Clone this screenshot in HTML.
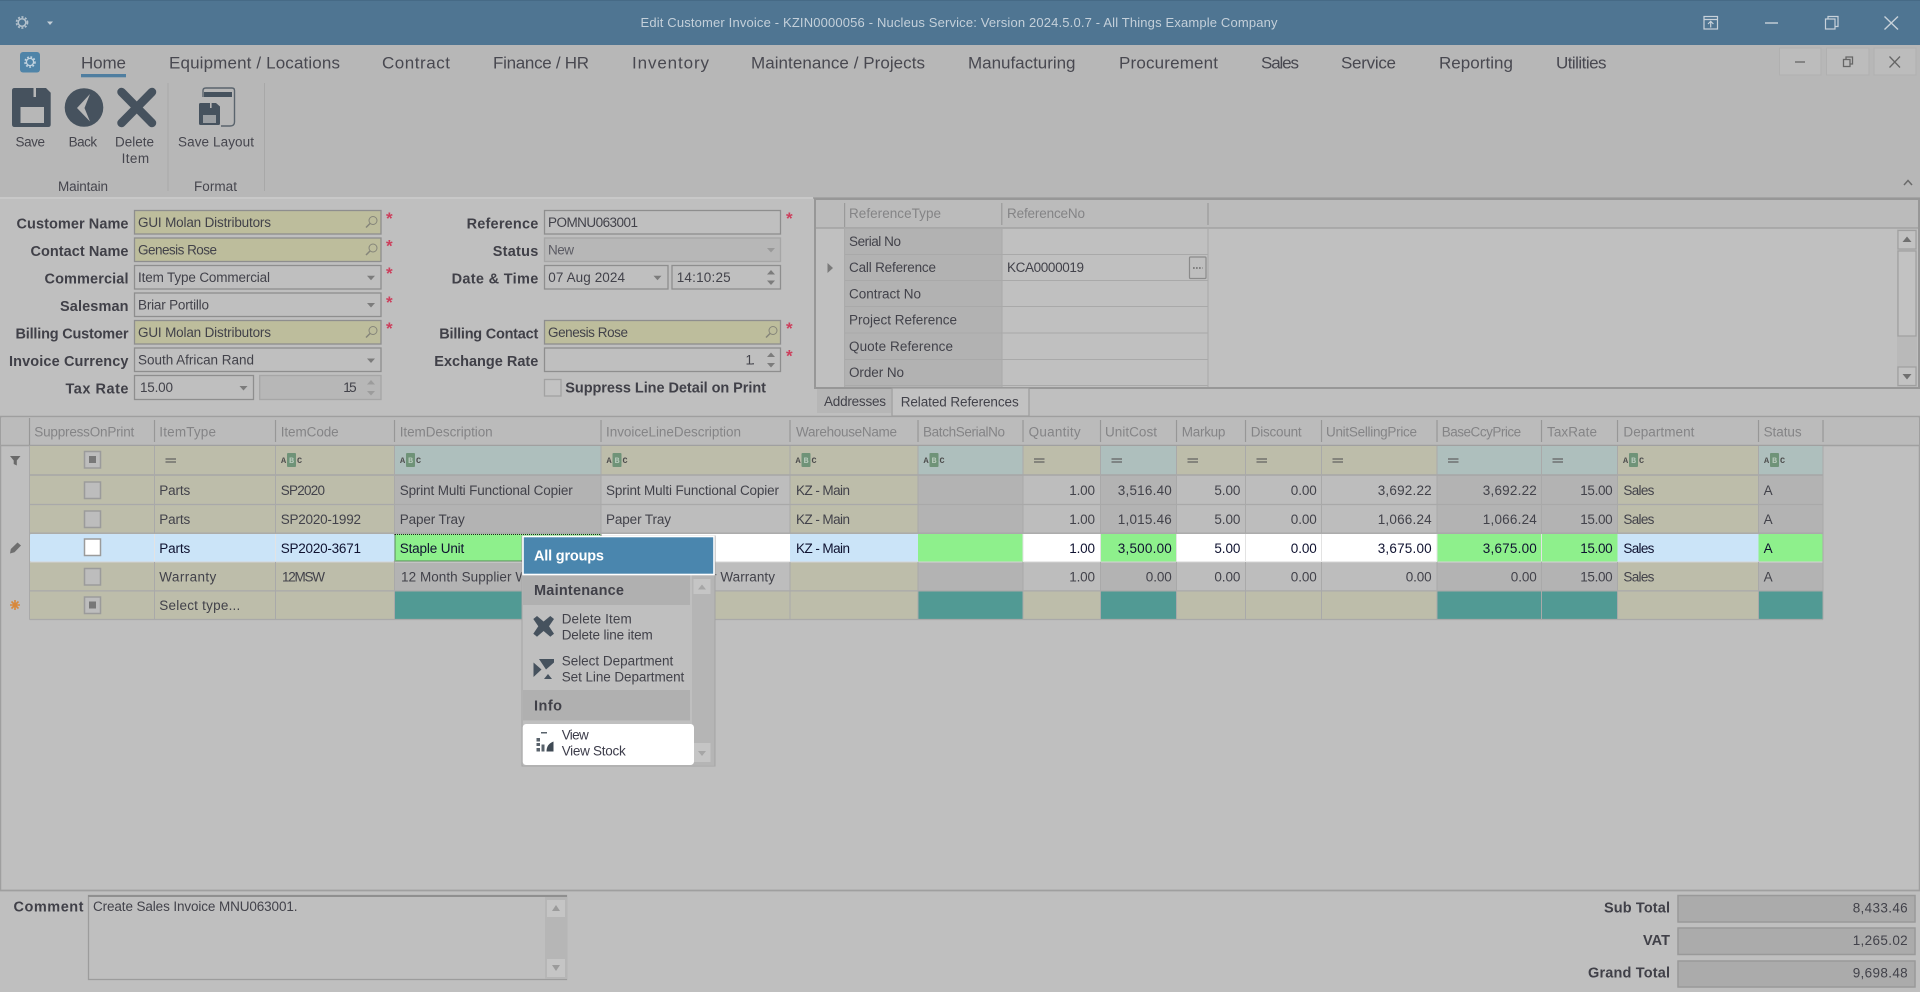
<!DOCTYPE html>
<html lang="en"><head><meta charset="utf-8"><title>Edit Customer Invoice</title>
<style>
html,body{margin:0;padding:0;width:1920px;height:992px;overflow:hidden;background:#bfbfbf}
svg{display:block}
text{font-family:"Liberation Sans",Arial,sans-serif;font-size:13.5px;fill:#42424a;white-space:pre}
.b{font-weight:bold;font-size:14.5px;fill:#404048}
.e{text-anchor:end}
.h{fill:#848486}
.k{fill:#0f1230}
.tab{font-size:17px;fill:#484850}
.rb{font-size:13.5px;fill:#46464e}
.abc{font-family:"Liberation Mono",monospace;font-size:8.5px;font-weight:bold;fill:#4d4d4d}
.tan{fill:#bdbdaa}.dk{fill:#b3b3b3}.lt{fill:#bdbdbd}.tl{fill:#519a94}.gr{fill:#8ef08c}.wh{fill:#fff}.bl{fill:#cbe4f8}.ft{fill:#aebfbd}
.f{fill:#bfbfbf;stroke:#8e8e8e;stroke-width:1.3}
.y{fill:#bdbd9c;stroke:#8e8e8e;stroke-width:1.3}
.d{fill:#b7b7b7;stroke:#a6a6a6;stroke-width:1.3}
.ast{fill:#cc3f5c;font-size:17px;font-weight:bold}
.ln{stroke:#a9a9a9;stroke-width:1;fill:none}
.ic{fill:#46525e}
</style></head><body>
<svg xmlns="http://www.w3.org/2000/svg" width="1920" height="992" viewBox="0 0 1920 992">
<defs>
<path id="dn" d="M-4-2H4L0 2.5Z" fill="#7c7c7c"/>
<path id="up" d="M-4 2H4L0-2.5Z" fill="#7c7c7c"/>
<g id="mag" fill="none" stroke="#85857a" stroke-width="1"><circle cx="1.5" cy="-1.5" r="4"/><path d="M-1.5 1.5L-5.5 5.5" stroke-width="1.5"/></g>
<g id="cb"><rect x="84.5" y="0.5" width="16" height="16.5" fill="#bdbdbd" stroke="#9b9b9b" stroke-width="1.5"/></g>
<g id="cbi"><rect x="84.5" y="0.5" width="16" height="16.5" fill="#bdbdbd" stroke="#9b9b9b" stroke-width="1.5"/><rect x="89" y="5" width="7" height="7" fill="#787878"/></g>
<path id="eq" d="M0 0H10.5M0 3H10.5" stroke="#626262" stroke-width="1.3" fill="none"/>
</defs>

<!-- page -->
<rect width="1920" height="992" fill="#bfbfbf"/>
<!-- title bar -->
<rect width="1920" height="45" fill="#4f7592"/>
<rect width="1920" height="1" fill="#466a86"/>
<circle cx="22" cy="22.5" r="3.8" fill="none" stroke="#b4c2cd" stroke-width="1.5"/>
<circle cx="22" cy="22.5" r="5.5" fill="none" stroke="#b4c2cd" stroke-width="1.7" stroke-dasharray="2 1.6"/>
<path d="M47 21.5H53L50 25Z" fill="#c3ced7"/>
<text x="959" y="27" text-anchor="middle" textLength="637" style="fill:#c4d0da;font-size:13px">Edit Customer Invoice - KZIN0000056 - Nucleus Service: Version 2024.5.0.7 - All Things Example Company</text>
<g fill="none" stroke="#c8d2da" stroke-width="1.2">
<rect x="1704" y="16.5" width="13.5" height="12.5"/><path d="M1704 19.5H1717.5M1710.7 27.5V21.5M1708 24L1710.7 21.3L1713.4 24"/>
<path d="M1765 23H1778" stroke-width="1.4"/>
<rect x="1825.5" y="19" width="9.5" height="10"/><path d="M1828 19V16.5H1838V26.5H1835"/>
<path d="M1884.5 16.5L1898 29.5M1898 16.5L1884.5 29.5" stroke-width="1.4"/>
</g>

<!-- ribbon -->
<rect y="45" width="1920" height="152" fill="#b7b7b7"/>
<rect y="197" width="813" height="2" fill="#c8c8c8"/>
<rect x="813" y="197" width="1107" height="2" fill="#a4a4a4"/>
<rect x="20" y="52" width="20" height="20.5" rx="3" fill="#4f84a8"/>
<circle cx="30" cy="62" r="3.6" fill="none" stroke="#c3d4e0" stroke-width="1.3"/>
<circle cx="30" cy="62" r="5" fill="none" stroke="#c3d4e0" stroke-width="1.6" stroke-dasharray="1.8 1.6"/>
<text class="tab" x="81" y="68.5" textLength="45">Home</text>
<rect x="81" y="74" width="45" height="3.3" fill="#4f7ea0"/>
<text class="tab" x="169" y="68.5" textLength="171">Equipment / Locations</text>
<text class="tab" x="382" y="68.5" textLength="68">Contract</text>
<text class="tab" x="493" y="68.5" textLength="96">Finance / HR</text>
<text class="tab" x="632" y="68.5" textLength="77">Inventory</text>
<text class="tab" x="751" y="68.5" textLength="174">Maintenance / Projects</text>
<text class="tab" x="968" y="68.5" textLength="107.5">Manufacturing</text>
<text class="tab" x="1119" y="68.5" textLength="99">Procurement</text>
<text class="tab" x="1261" y="68.5" textLength="38">Sales</text>
<text class="tab" x="1341" y="68.5" textLength="55">Service</text>
<text class="tab" x="1439" y="68.5" textLength="74">Reporting</text>
<text class="tab" x="1556" y="68.5" textLength="50.5">Utilities</text>
<!-- MDI buttons -->
<g fill="#bcbcbc" stroke="#b0b0b0"><rect x="1779.5" y="48" width="41.5" height="27"/><rect x="1826.5" y="48" width="42.5" height="27"/><rect x="1874" y="48" width="42" height="27"/></g>
<g fill="none" stroke="#666" stroke-width="1.3"><path d="M1795 62H1805"/><rect x="1843.5" y="59.5" width="6.5" height="7"/><path d="M1846 59.5V57H1852.5V64H1850"/><path d="M1889.5 56.5L1900 67.5M1900 56.5L1889.5 67.5"/></g>
<path d="M1904 185L1908 180.5L1912 185" fill="none" stroke="#6a6a6a" stroke-width="1.5"/>
<!-- ribbon icons -->
<path class="ic" d="M14.5 88H46L50.7 92.7V124.5Q50.7 127 48.2 127H14.5Q12 127 12 124.5V90.5Q12 88 14.5 88Z"/>
<rect x="20.5" y="107" width="23.5" height="16" fill="#b7b7b7"/><rect x="33.5" y="88" width="2.5" height="9" fill="#b7b7b7"/>
<circle class="ic" cx="84" cy="107.5" r="19.3"/>
<path d="M90 94L77 108L90 121.5L84.5 108Z" fill="#b7b7b7"/>
<path d="M121.5 92L152 123M152 92L121.5 123" stroke="#46525e" stroke-width="8.5" stroke-linecap="round" fill="none"/>
<path d="M203 97V90.5Q203 88 206 88H232Q234.5 88 234.5 90.5V122Q234.5 126 230 126H221" fill="none" stroke="#5a646d" stroke-width="1.4"/>
<rect x="204" y="92" width="28" height="5" fill="#46525e"/>
<path class="ic" d="M200.5 103H216L220 106.5V123.5Q220 125 218.5 125H200.5Q199 125 199 123.5V104.5Q199 103 200.5 103Z"/>
<rect x="203" y="115" width="13" height="8" fill="#9a9ea2"/><rect x="210" y="103" width="1.6" height="5" fill="#b7b7b7"/>
<text class="rb" x="15.5" y="146.5" textLength="29.5">Save</text>
<text class="rb" x="68.6" y="146.5" textLength="28.5">Back</text>
<text class="rb" x="115" y="146.5" textLength="39">Delete</text>
<text class="rb" x="121.6" y="163" textLength="27.5">Item</text>
<text class="rb" x="178" y="146.5" textLength="76">Save Layout</text>
<text class="rb" x="58" y="191" textLength="50">Maintain</text>
<text class="rb" x="194" y="191" textLength="43">Format</text>
<path d="M168 83V191M264.5 83V191" stroke="#a8a8a8" fill="none"/>

<!-- form column 1 -->
<g>
<rect class="y" x="134.5" y="210.5" width="246.5" height="23.5"/>
<rect class="y" x="134.5" y="238" width="246.5" height="23.5"/>
<rect class="f" x="134.5" y="265.5" width="246.5" height="23.5"/>
<rect class="f" x="134.5" y="293" width="246.5" height="23.5"/>
<rect class="y" x="134.5" y="320.5" width="246.5" height="23.5"/>
<rect class="f" x="134.5" y="348" width="246.5" height="23.5"/>
<rect class="f" x="134.5" y="375.5" width="119" height="24"/>
<rect class="d" x="259.7" y="375.5" width="121.3" height="24"/>
</g>
<g class="b">
<text class="b e" x="128.5" y="228.3" textLength="112">Customer Name</text>
<text class="b e" x="128.5" y="255.8" textLength="98">Contact Name</text>
<text class="b e" x="128.5" y="283.3" textLength="84">Commercial</text>
<text class="b e" x="128.5" y="310.8" textLength="68.5">Salesman</text>
<text class="b e" x="128.5" y="338.3" textLength="113">Billing Customer</text>
<text class="b e" x="128.5" y="365.8" textLength="119.5">Invoice Currency</text>
<text class="b e" x="128.5" y="393.3" textLength="63">Tax Rate</text>
</g>
<text x="138" y="227" textLength="133">GUI Molan Distributors</text>
<text x="138" y="254.5" textLength="79">Genesis Rose</text>
<text x="138" y="282" textLength="132">Item Type Commercial</text>
<text x="138" y="309.5" textLength="71">Briar Portillo</text>
<text x="138" y="337" textLength="133">GUI Molan Distributors</text>
<text x="138" y="364.5" textLength="116">South African Rand</text>
<text x="140" y="392" textLength="33">15.00</text>
<text class="e" x="356.7" y="392" textLength="13.5">15</text>
<use href="#mag" x="371.5" y="222"/><use href="#mag" x="371.5" y="249.5"/><use href="#mag" x="371.5" y="332"/>
<use href="#dn" x="371" y="277.7"/><use href="#dn" x="371" y="305"/><use href="#dn" x="371" y="360.5"/><use href="#dn" x="243.5" y="388"/>
<g opacity=".45"><use href="#up" x="371" y="382.5"/><use href="#dn" x="371" y="393"/></g>
<g class="ast"><text class="ast" x="386" y="224">*</text><text class="ast" x="386" y="251.5">*</text><text class="ast" x="386" y="279">*</text><text class="ast" x="386" y="308">*</text><text class="ast" x="386" y="334">*</text></g>

<!-- form column 2 -->
<rect class="f" x="544.5" y="210.5" width="236" height="23.5"/>
<rect class="d" x="544.5" y="238" width="236" height="23.5"/>
<rect class="f" x="544.5" y="265.5" width="123.5" height="23.5"/>
<rect class="f" x="672" y="265.5" width="108.5" height="23.5"/>
<rect class="y" x="544.5" y="320.5" width="236" height="23.5"/>
<rect class="f" x="544.5" y="348" width="236" height="23.5"/>
<rect x="544.5" y="379.5" width="16.5" height="16.5" fill="#c2c2c2" stroke="#a2a2a2" stroke-width="1.3"/>
<text class="b e" x="538.3" y="228.3" textLength="71.7">Reference</text>
<text class="b e" x="538.3" y="255.8" textLength="45.6">Status</text>
<text class="b e" x="538.3" y="283.3" textLength="86.7">Date &amp; Time</text>
<text class="b e" x="538.3" y="338.3" textLength="99">Billing Contact</text>
<text class="b e" x="538.3" y="365.8" textLength="104">Exchange Rate</text>
<text class="b" x="565.3" y="392.5" textLength="200.7">Suppress Line Detail on Print</text>
<text x="548" y="227" textLength="90">POMNU063001</text>
<text x="548" y="254.5" textLength="26" style="fill:#5c5c64">New</text>
<text x="548.3" y="282" textLength="76.7">07 Aug 2024</text>
<text x="676.7" y="282" textLength="54">14:10:25</text>
<text x="548" y="337" textLength="80">Genesis Rose</text>
<text class="e" x="755" y="364.5" textLength="9.5">1.</text>
<g opacity=".5"><use href="#dn" x="771" y="250"/></g>
<use href="#dn" x="657.5" y="277.7"/><use href="#up" x="771" y="272.5"/><use href="#dn" x="771" y="282.5"/>
<use href="#up" x="771" y="355"/><use href="#dn" x="771" y="365"/>
<use href="#mag" x="771.5" y="332"/>
<text class="ast" x="786" y="224">*</text><text class="ast" x="786" y="334">*</text><text class="ast" x="786" y="361.5">*</text>

<!-- references panel -->
<rect x="815" y="199" width="1104" height="189" fill="#c0c0c0" stroke="#979797" stroke-width="2"/>
<rect x="816" y="200" width="1102" height="27.5" fill="#bbbbbb"/>
<path d="M816 228H1918" stroke="#a2a2a2" stroke-width="1.5"/>
<path d="M844.6 203V227M1001.8 203V225M1208 203V225" stroke="#9a9a9a" stroke-width="1.2" fill="none"/>
<text class="h" x="849" y="218" textLength="92">ReferenceType</text>
<text class="h" x="1007" y="218" textLength="78">ReferenceNo</text>
<rect x="845" y="229" width="157" height="158" fill="#b2b2b2"/>
<path class="ln" d="M845 254.5H1208M845 280.5H1208M845 306.5H1208M845 333H1208M845 359.5H1208M845 385.5H1208M844.6 229V387M1002 229V387M1208 229V387"/>
<path d="M827.5 263L833 268L827.5 273Z" fill="#7a7a7a"/>
<text x="849" y="246" textLength="52">Serial No</text>
<text x="849" y="272.2" textLength="87">Call Reference</text>
<text x="849" y="298.5" textLength="72">Contract No</text>
<text x="849" y="324.7" textLength="108">Project Reference</text>
<text x="849" y="351" textLength="104">Quote Reference</text>
<text x="849" y="377" textLength="55">Order No</text>
<text x="1007" y="272.2" textLength="77">KCA0000019</text>
<rect x="1189.5" y="257" width="16.5" height="21.5" rx="1" fill="#bfbfbf" stroke="#8b8b8b" stroke-width="1.2"/>
<path d="M1193 268H1202.5" stroke="#6c6c6c" stroke-width="1.6" stroke-dasharray="1.7 1.3"/>
<!-- scrollbar -->
<rect x="1897" y="229" width="20" height="158" fill="#b9b9b9"/>
<g fill="#c2c2c2" stroke="#9f9f9f" stroke-width="1.2"><rect x="1898" y="230.5" width="18" height="18.5"/><rect x="1898" y="251" width="18" height="85"/><rect x="1898" y="367" width="18" height="18.5"/></g>
<path d="M1902.5 242H1911.5L1907 236.5Z" fill="#707070"/><path d="M1902.5 374H1911.5L1907 379.5Z" fill="#707070"/>
<!-- tabs -->
<rect x="817" y="389" width="74" height="24" fill="#b6b6b6"/>
<rect x="892" y="388" width="137" height="28" fill="#c2c2c2" stroke="#9c9c9c" stroke-width="1.2"/>
<text x="824" y="406" textLength="62">Addresses</text>
<text x="900.7" y="406.7" textLength="118">Related References</text>

<!-- grid frame -->
<rect x="0.5" y="416.5" width="1919" height="474" fill="#bfbfbf" stroke="#9f9f9f" stroke-width="1.5"/>
<rect x="1" y="418" width="1918" height="27" fill="#bbbbbb"/>
<path d="M1 445.5H1919" stroke="#a0a0a0" stroke-width="1.5"/>
<path d="M29.5 418V445M154.5 420V442M275.5 420V442M394.5 420V442M601 420V442M790 420V442M918 420V442M1023 420V442M1100.5 420V442M1176.5 420V442M1245.5 420V442M1321.5 420V442M1437 420V442M1541.5 420V442M1617.5 420V442M1758.5 420V442M1823 420V442" stroke="#979797" stroke-width="1.2" fill="none"/>
<g>
<text class="h" x="34.3" y="436.5" textLength="100">SuppressOnPrint</text>
<text class="h" x="159.3" y="436.5" textLength="56.7">ItemType</text>
<text class="h" x="280.7" y="436.5" textLength="58">ItemCode</text>
<text class="h" x="399.7" y="436.5" textLength="93">ItemDescription</text>
<text class="h" x="606" y="436.5" textLength="135">InvoiceLineDescription</text>
<text class="h" x="796" y="436.5" textLength="101">WarehouseName</text>
<text class="h" x="923" y="436.5" textLength="82">BatchSerialNo</text>
<text class="h" x="1028.6" y="436.5" textLength="52">Quantity</text>
<text class="h" x="1105" y="436.5" textLength="52">UnitCost</text>
<text class="h" x="1181.8" y="436.5" textLength="43.6">Markup</text>
<text class="h" x="1250.7" y="436.5" textLength="51">Discount</text>
<text class="h" x="1326" y="436.5" textLength="91">UnitSellingPrice</text>
<text class="h" x="1441.7" y="436.5" textLength="79.5">BaseCcyPrice</text>
<text class="h" x="1547" y="436.5" textLength="50">TaxRate</text>
<text class="h" x="1623.4" y="436.5" textLength="71">Department</text>
<text class="h" x="1763.6" y="436.5" textLength="38">Status</text>
</g>
<!-- filter row -->
<g>
<rect class="tan" x="29.5" y="446" width="125" height="28.5"/><rect class="tan" x="154.5" y="446" width="121" height="28.5"/><rect class="tan" x="275.5" y="446" width="119" height="28.5"/>
<rect class="ft" x="394.5" y="446" width="206.5" height="28.5"/><rect class="tan" x="601" y="446" width="189" height="28.5"/><rect class="tan" x="790" y="446" width="128" height="28.5"/>
<rect class="ft" x="918" y="446" width="105" height="28.5"/><rect class="tan" x="1023" y="446" width="77.5" height="28.5"/><rect class="ft" x="1100.5" y="446" width="76" height="28.5"/>
<rect class="tan" x="1176.5" y="446" width="69" height="28.5"/><rect class="tan" x="1245.5" y="446" width="76" height="28.5"/><rect class="tan" x="1321.5" y="446" width="115.5" height="28.5"/>
<rect class="ft" x="1437" y="446" width="104.5" height="28.5"/><rect class="ft" x="1541.5" y="446" width="76" height="28.5"/><rect class="tan" x="1617.5" y="446" width="141" height="28.5"/><rect class="ft" x="1758.5" y="446" width="64.5" height="28.5"/>
</g>
<path d="M10 456H20.5L16.8 460.5V465.5L13.7 464V460.5Z" fill="#6a6a6a"/>
<use href="#cbi" y="451"/>
<use href="#eq" x="165.5" y="459"/><use href="#eq" x="1034" y="459"/><use href="#eq" x="1111.5" y="459"/><use href="#eq" x="1187.5" y="459"/><use href="#eq" x="1256.5" y="459"/><use href="#eq" x="1332.5" y="459"/><use href="#eq" x="1448" y="459"/><use href="#eq" x="1552.5" y="459"/>
<g transform="translate(275.5 0)"><rect x="11.5" y="453" width="9" height="14" rx="1" fill="#6f9378"/><text class="abc" x="5.5" y="463">A</text><text class="abc" x="13.5" y="463" style="fill:#b7c9bb">B</text><text class="abc" x="21.5" y="463">C</text></g>
<g transform="translate(394.5 0)"><rect x="11.5" y="453" width="9" height="14" rx="1" fill="#6f9378"/><text class="abc" x="5.5" y="463">A</text><text class="abc" x="13.5" y="463" style="fill:#b7c9bb">B</text><text class="abc" x="21.5" y="463">C</text></g>
<g transform="translate(601 0)"><rect x="11.5" y="453" width="9" height="14" rx="1" fill="#6f9378"/><text class="abc" x="5.5" y="463">A</text><text class="abc" x="13.5" y="463" style="fill:#b7c9bb">B</text><text class="abc" x="21.5" y="463">C</text></g>
<g transform="translate(790 0)"><rect x="11.5" y="453" width="9" height="14" rx="1" fill="#6f9378"/><text class="abc" x="5.5" y="463">A</text><text class="abc" x="13.5" y="463" style="fill:#b7c9bb">B</text><text class="abc" x="21.5" y="463">C</text></g>
<g transform="translate(918 0)"><rect x="11.5" y="453" width="9" height="14" rx="1" fill="#6f9378"/><text class="abc" x="5.5" y="463">A</text><text class="abc" x="13.5" y="463" style="fill:#b7c9bb">B</text><text class="abc" x="21.5" y="463">C</text></g>
<g transform="translate(1617.5 0)"><rect x="11.5" y="453" width="9" height="14" rx="1" fill="#6f9378"/><text class="abc" x="5.5" y="463">A</text><text class="abc" x="13.5" y="463" style="fill:#b7c9bb">B</text><text class="abc" x="21.5" y="463">C</text></g>
<g transform="translate(1758.5 0)"><rect x="11.5" y="453" width="9" height="14" rx="1" fill="#6f9378"/><text class="abc" x="5.5" y="463">A</text><text class="abc" x="13.5" y="463" style="fill:#b7c9bb">B</text><text class="abc" x="21.5" y="463">C</text></g>

<!-- data columns -->
<g>
<rect class="tan" x="29.5" y="475.5" width="125" height="144"/><rect class="tan" x="154.5" y="475.5" width="121" height="144"/><rect class="tan" x="275.5" y="475.5" width="119" height="144"/>
<rect class="dk" x="394.5" y="475.5" width="206.5" height="144"/><rect class="lt" x="601" y="475.5" width="189" height="144"/><rect class="tan" x="790" y="475.5" width="128" height="144"/>
<rect class="dk" x="918" y="475.5" width="105" height="144"/><rect class="lt" x="1023" y="475.5" width="77.5" height="144"/><rect class="dk" x="1100.5" y="475.5" width="76" height="144"/>
<rect class="lt" x="1176.5" y="475.5" width="69" height="144"/><rect class="lt" x="1245.5" y="475.5" width="76" height="144"/><rect class="lt" x="1321.5" y="475.5" width="115.5" height="144"/>
<rect class="dk" x="1437" y="475.5" width="104.5" height="144"/><rect class="dk" x="1541.5" y="475.5" width="76" height="144"/><rect class="tan" x="1617.5" y="475.5" width="141" height="144"/><rect class="dk" x="1758.5" y="475.5" width="64.5" height="144"/>
</g>
<!-- new row -->
<g>
<rect class="tan" x="29.5" y="591.5" width="1793.5" height="28"/>
<rect class="tl" x="394.5" y="591.5" width="206.5" height="28"/><rect class="tl" x="918" y="591.5" width="105" height="28"/><rect class="tl" x="1100.5" y="591.5" width="76" height="28"/><rect class="tl" x="1437" y="591.5" width="104.5" height="28"/><rect class="tl" x="1541.5" y="591.5" width="76" height="28"/><rect class="tl" x="1758.5" y="591.5" width="64.5" height="28"/>
</g>
<!-- selected row -->
<g>
<rect class="bl" x="29.5" y="534" width="365" height="27.5" rx="2"/>
<rect class="gr" x="394.5" y="534" width="206.5" height="27.5"/><rect class="wh" x="601" y="534" width="189" height="27.5"/><rect class="bl" x="790" y="534" width="128" height="27.5"/>
<rect class="gr" x="918" y="534" width="105" height="27.5"/><rect class="wh" x="1023" y="534" width="77.5" height="27.5"/><rect class="gr" x="1100.5" y="534" width="76" height="27.5"/>
<rect class="wh" x="1176.5" y="534" width="260.5" height="27.5"/><rect class="gr" x="1437" y="534" width="180.5" height="27.5"/><rect class="bl" x="1617.5" y="534" width="141" height="27.5"/><rect class="gr" x="1758.5" y="534" width="64.5" height="27.5" rx="2"/>
</g>
<!-- lines -->
<path d="M29.5 475H1823" stroke="#a6a6a6" stroke-width="1.5"/>
<path d="M29.5 504.5H1823M29.5 533.2H1823M29.5 590.9H1823M29.5 619.5H1823" stroke="#a9a9a9" stroke-width="1.3"/>
<path d="M29.5 562H1823" stroke="#d4d4d4" stroke-width="1"/>
<path class="ln" d="M29.5 446V619.5M154.5 446V533M275.5 446V533M394.5 446V533M601 446V533M790 446V533M918 446V533M1023 446V533M1100.5 446V533M1176.5 446V533M1245.5 446V533M1321.5 446V533M1437 446V533M1541.5 446V533M1617.5 446V533M1758.5 446V533M1823 446V619.5"/>
<path class="ln" d="M154.5 562V619.5M275.5 562V619.5M394.5 562V619.5M601 562V619.5M790 562V619.5M918 562V619.5M1023 562V619.5M1100.5 562V619.5M1176.5 562V619.5M1245.5 562V619.5M1321.5 562V619.5M1437 562V619.5M1541.5 562V619.5M1617.5 562V619.5M1758.5 562V619.5"/>
<path d="M154.5 534V561M275.5 534V561M601 534V561M1023 534V561M1100.5 534V561M1176.5 534V561M1245.5 534V561M1321.5 534V561M1437 534V561M1541.5 534V561" stroke="#e3e3e3" stroke-width="1" fill="none"/>
<rect x="395" y="534.5" width="206" height="26.5" fill="none" stroke="#222" stroke-width="1" stroke-dasharray="1 1"/>

<use href="#cb" y="481.5"/><use href="#cb" y="510.5"/>
<rect x="84.5" y="539" width="16" height="16.5" fill="#fff" stroke="#9b9b9b" stroke-width="1.5"/>
<use href="#cb" y="568"/><use href="#cbi" y="596.5"/>
<path d="M10 553.5L10.8 549L17.5 542.5L21 545.5L14.5 552.2Z" fill="#6f6f6f"/>
<g stroke="#d8883a" stroke-width="1.6"><path d="M10 605H20M15 600V610M11.5 601.5L18.5 608.5M18.5 601.5L11.5 608.5"/></g>

<!-- row text -->
<text x="159.3" y="495" textLength="31">Parts</text><text x="280.7" y="495" textLength="44.3">SP2020</text><text x="399.7" y="495" textLength="173">Sprint Multi Functional Copier</text><text x="606" y="495" textLength="173">Sprint Multi Functional Copier</text><text x="796" y="495" textLength="54">KZ - Main</text>
<text class="e" x="1095" y="495" textLength="25.7">1.00</text><text class="e" x="1171.8" y="495" textLength="54">3,516.40</text><text class="e" x="1240.4" y="495" textLength="26">5.00</text><text class="e" x="1316.8" y="495" textLength="26">0.00</text><text class="e" x="1431.7" y="495" textLength="54">3,692.22</text><text class="e" x="1536.8" y="495" textLength="54">3,692.22</text><text class="e" x="1612.7" y="495" textLength="32.5">15.00</text><text x="1623.4" y="495" textLength="31">Sales</text><text x="1763.6" y="495" textLength="8">A</text>

<text x="159.3" y="524" textLength="31">Parts</text><text x="280.7" y="524" textLength="80.3">SP2020-1992</text><text x="399.7" y="524" textLength="65">Paper Tray</text><text x="606" y="524" textLength="65">Paper Tray</text><text x="796" y="524" textLength="54">KZ - Main</text>
<text class="e" x="1095" y="524" textLength="25.7">1.00</text><text class="e" x="1171.8" y="524" textLength="54">1,015.46</text><text class="e" x="1240.4" y="524" textLength="26">5.00</text><text class="e" x="1316.8" y="524" textLength="26">0.00</text><text class="e" x="1431.7" y="524" textLength="54">1,066.24</text><text class="e" x="1536.8" y="524" textLength="54">1,066.24</text><text class="e" x="1612.7" y="524" textLength="32.5">15.00</text><text x="1623.4" y="524" textLength="31">Sales</text><text x="1763.6" y="524" textLength="8">A</text>

<text class="k" x="159.3" y="553" textLength="31">Parts</text><text class="k" x="280.7" y="553" textLength="80.3">SP2020-3671</text><text class="k" x="399.7" y="553" textLength="64.6">Staple Unit</text><text class="k" x="796" y="553" textLength="54">KZ - Main</text>
<text class="k e" x="1095" y="553" textLength="25.7">1.00</text><text class="k e" x="1171.8" y="553" textLength="54">3,500.00</text><text class="k e" x="1240.4" y="553" textLength="26">5.00</text><text class="k e" x="1316.8" y="553" textLength="26">0.00</text><text class="k e" x="1431.7" y="553" textLength="54">3,675.00</text><text class="k e" x="1536.8" y="553" textLength="54">3,675.00</text><text class="k e" x="1612.7" y="553" textLength="32.5">15.00</text><text class="k" x="1623.4" y="553" textLength="31">Sales</text><text class="k" x="1763.6" y="553" textLength="8">A</text>

<text x="159.3" y="581.5" textLength="57">Warranty</text><text x="282" y="581.5" textLength="43">12MSW</text><text x="401" y="581.5" textLength="169">12 Month Supplier Warranty</text><text x="606" y="581.5" textLength="169">12 Month Supplier Warranty</text>
<text class="e" x="1095" y="581.5" textLength="25.7">1.00</text><text class="e" x="1171.8" y="581.5" textLength="26">0.00</text><text class="e" x="1240.4" y="581.5" textLength="26">0.00</text><text class="e" x="1316.8" y="581.5" textLength="26">0.00</text><text class="e" x="1431.7" y="581.5" textLength="26">0.00</text><text class="e" x="1536.8" y="581.5" textLength="26">0.00</text><text class="e" x="1612.7" y="581.5" textLength="32.5">15.00</text><text x="1623.4" y="581.5" textLength="31">Sales</text><text x="1763.6" y="581.5" textLength="8">A</text>

<text x="159.3" y="610" textLength="81">Select type...</text>

<!-- popup -->
<rect x="522" y="536" width="193" height="230" fill="#bfbfbf" stroke="#a4a4a4" stroke-width="1"/>
<rect x="692" y="575" width="22.5" height="190" fill="#b5b5b5"/>
<rect x="693.5" y="579" width="17" height="15" fill="#c5c5c5"/><rect x="693.5" y="743" width="17" height="19" fill="#c5c5c5"/>
<path d="M698 589.5H706L702 584.5Z" fill="#a6a6a6"/><path d="M698 751H706L702 756Z" fill="#a6a6a6"/>
<rect x="523" y="575.5" width="167" height="29.5" fill="#b0b0b0"/>
<rect x="523" y="690" width="167" height="30.5" fill="#b0b0b0"/>
<rect x="523" y="536.5" width="191" height="38" fill="#4a86ae" stroke="#fff" stroke-width="1.6"/>
<text class="b" x="534" y="560.7" textLength="70" style="fill:#fff">All groups</text>
<text class="b" x="534" y="595" textLength="90">Maintenance</text>
<text class="b" x="534" y="710.7" textLength="28">Info</text>
<path class="ic" d="M533.3 619L537 616L543.6 621.5L550.3 616L554 619L549 626.3L554 633.7L550.3 636.7L543.6 631L537 636.7L533.3 633.7L538.3 626.3Z"/>
<path class="ic" d="M539 659H554V662.5L546 669.5ZM533.5 662.5L541.5 669.5L533.5 677ZM544 679L548 674L552 679Z"/>
<text x="561.7" y="623.3" textLength="70">Delete Item</text>
<text x="561.7" y="639.3" textLength="91">Delete line item</text>
<text x="561.7" y="665.7" textLength="111.6">Select Department</text>
<text x="561.7" y="681.7" textLength="122.6">Set Line Department</text>
<rect x="522.7" y="724" width="171.3" height="41" rx="3.5" fill="#fff"/>
<g fill="#5a636c"><rect x="541" y="732" width="6" height="1.5"/><rect x="536.5" y="738" width="3.5" height="3.5"/><rect x="536.5" y="743" width="3.5" height="3"/><rect x="536.5" y="748" width="3.5" height="3.5"/><rect x="541.5" y="744.5" width="3" height="7"/><path d="M553.5 741.5V751.5H546.5Q546.5 744 553.5 741.5Z" fill="#3f4a54"/></g>
<text x="561.7" y="739.3" textLength="27" style="fill:#3c3c4a">View</text>
<text x="561.7" y="755.3" textLength="64" style="fill:#3c3c4a">View Stock</text>

<!-- footer -->
<path d="M0 890.5H1920" stroke="#9f9f9f" stroke-width="1.5"/>
<text class="b" x="13.5" y="911.5" textLength="70">Comment</text>
<rect x="88.5" y="895.5" width="478" height="84" fill="#bfbfbf" stroke="#9c9c9c" stroke-width="1.3"/>
<rect x="88" y="895" width="479" height="2" fill="#8f8f8f"/>
<text x="93" y="911" textLength="204.5">Create Sales Invoice MNU063001.</text>
<rect x="545" y="897" width="22" height="82" fill="#b6b6b6"/>
<rect x="547" y="900" width="18" height="17" fill="#c5c5c5"/><rect x="547" y="959" width="18" height="18" fill="#c5c5c5"/>
<path d="M552 911H560L556 905Z" fill="#9b9b9b"/><path d="M552 965H560L556 971Z" fill="#9b9b9b"/>
<text class="b e" x="1670" y="912.7" textLength="66">Sub Total</text>
<text class="b e" x="1670" y="945" textLength="27">VAT</text>
<text class="b e" x="1670" y="977.7" textLength="82">Grand Total</text>
<g fill="#ababab" stroke="#999" stroke-width="1.5"><rect x="1678" y="895.5" width="237" height="26.5"/><rect x="1678" y="928" width="237" height="26.5"/><rect x="1678" y="961" width="237" height="26"/></g>
<text class="e" x="1907.7" y="912.7" textLength="55">8,433.46</text>
<text class="e" x="1907.7" y="945" textLength="55">1,265.02</text>
<text class="e" x="1907.7" y="977.7" textLength="55">9,698.48</text>
</svg>
</body></html>
